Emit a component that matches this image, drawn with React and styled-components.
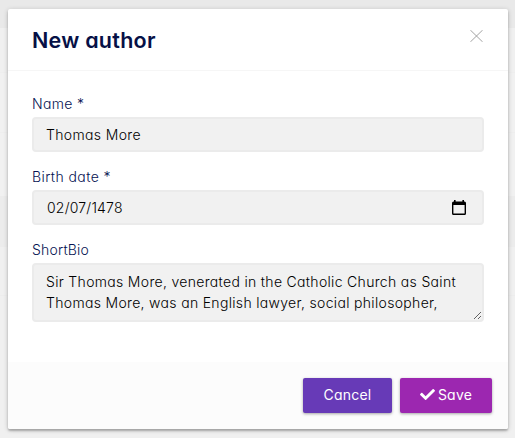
import React from 'react';
import styled, { createGlobalStyle, css } from 'styled-components';

const GlobalStyle = createGlobalStyle`
  *, *::before, *::after { box-sizing: border-box; }
  html { height: 100%; }
  body {
    margin: 0;
    height: 100%;
    overflow: hidden;
    color: #061352;
    font-family: Inter, "Open Sans", sans-serif;
    font-feature-settings: "cv11";
    font-weight: 300;
    font-size: 14px;
    background: linear-gradient(
      #e9e9e9 0 28px, #f0f0f0 28px 72px, #eeeeee 72px 73px,
      #f1f1f1 73px 132px, #eeeeee 132px 133px, #f1f1f1 133px 196px,
      #ececec 196px 247px, #f0f0f0 247px 295px, #ededed 295px 296px, #f0f0f0 296px
    );
  }
`;

const Backdrop = styled.main`
  height: 438px;
  padding: 9px 7px 9px 8px;
`;

const Dialog = styled.section`
  display: flex;
  flex-direction: column;
  height: 420px;
  background: #fff;
  border-radius: 2px;
  overflow: hidden;
  box-shadow: 0 2px 2px rgba(0, 0, 0, 0.22), 0 1px 5px rgba(0, 0, 0, 0.2);
`;

const Header = styled.header`
  display: flex;
  justify-content: space-between;
  height: 62px;
  padding: 15px 25px 0 24px;
  border-bottom: 1px solid #f6f6f6;
`;

const Title = styled.h1`
  margin: 0;
  font-size: 21.5px;
  line-height: 32px;
  font-weight: 600;
  letter-spacing: 0.25px;
  color: #061046;
`;

const CloseButton = styled.button`
  display: flex;
  width: 13px;
  height: 13px;
  margin-top: 6px;
  padding: 0;
  border: 0;
  background: none;
  color: #999;
`;

const Form = styled.form`
  flex: 1;
  display: flex;
  flex-direction: column;
  gap: 14px;
  padding: 22px 24px 0;
`;

const Field = styled.label`
  display: flex;
  flex-direction: column;
`;

const LabelText = styled.span`
  height: 24px;
  line-height: 22px;
  letter-spacing: ${({ $tracking }) => $tracking || '0.35px'};
`;

const control = css`
  display: block;
  width: 100%;
  margin: 0;
  padding: 0 12px;
  border: 2px solid #ebebeb;
  border-radius: 4px;
  outline: none;
  background: #f1f1f1;
  color: #000;
  font: inherit;
  font-feature-settings: inherit;
  letter-spacing: ${({ $tracking }) => $tracking || '0.35px'};
`;

const Input = styled.input`
  ${control}
  height: 35px;
`;

const DateBox = styled.div`
  ${control}
  display: flex;
  align-items: center;
  justify-content: space-between;
  height: 35px;
  padding: 0 16px 0 13px;
`;

const TextArea = styled.textarea`
  ${control}
  height: 59px;
  padding: 6px 12px 0;
  line-height: 21px;
  overflow: hidden;
  resize: vertical;
  white-space: pre;
`;

const Footer = styled.footer`
  display: flex;
  justify-content: flex-end;
  gap: 8px;
  height: 67px;
  padding: 16px 16px 0;
  background: #fcfcfc;
`;

const Button = styled.button`
  display: flex;
  align-items: center;
  justify-content: center;
  gap: 3px;
  width: ${({ $width }) => $width};
  height: 35px;
  padding: 0 0 2px;
  border: 0;
  border-radius: 2px;
  background: ${({ $tone }) => $tone};
  color: #fff;
  font: inherit;
  font-weight: 400;
  font-feature-settings: inherit;
  letter-spacing: 0.2px;
  box-shadow: 0 1px 3px rgba(0, 0, 0, 0.35);
`;

const CloseIcon = () => (
  <svg width="13" height="12" viewBox="0 0 13 12" stroke="currentColor" strokeWidth="0.9">
    <path d="M.3 0 12.7 12M12.7 0 .3 12" />
  </svg>
);

const CalendarIcon = () => (
  <svg width="14" height="15" viewBox="0 0 14 15">
    <path fill="#000" fillRule="evenodd" d="M2 0h1.6v1.5h6.8V0H12v1.5h.5A1.5 1.5 0 0 1 14 3v10.5a1.5 1.5 0 0 1-1.5 1.5h-11A1.5 1.5 0 0 1 0 13.500V3a1.500 1.500 0 0 1 1.500-1.500H2zM1.400 5v8.600h11.200V5z" />
  </svg>
);

const CheckIcon = () => (
  <svg width="15" height="15" viewBox="0 0 512 512" fill="currentColor">
    <path d="M173.898 439.404l-166.400-166.400c-9.997-9.997-9.997-26.206 0-36.204l36.203-36.204c9.997-9.998 26.207-9.998 36.204 0L192 312.690 432.095 72.596c9.997-9.997 26.207-9.997 36.204 0l36.203 36.204c9.997 9.997 9.997 26.206 0 36.204l-294.400 294.401c-9.998 9.997-26.207 9.997-36.204-.001z" />
  </svg>
);

const bio = 'Sir Thomas More, venerated in the Catholic Church as Saint\nThomas More, was an English lawyer, social philosopher,';

export default function App() {
  return (
    <>
      <GlobalStyle />
      <Backdrop>
        <Dialog role="dialog" aria-label="New author">
          <Header>
            <Title>New author</Title>
            <CloseButton type="button" aria-label="Close"><CloseIcon /></CloseButton>
          </Header>
          <Form>
            <Field>
              <LabelText>Name *</LabelText>
              <Input defaultValue="Thomas More" />
            </Field>
            <Field>
              <LabelText $tracking="0.42px">Birth date *</LabelText>
              <DateBox $tracking="0.2px"><span>02/07/1478</span><CalendarIcon /></DateBox>
            </Field>
            <Field>
              <LabelText $tracking="0.2px">ShortBio</LabelText>
              <TextArea defaultValue={bio} spellCheck={false} $tracking="0.32px" />
            </Field>
          </Form>
          <Footer>
            <Button type="button" $tone="#673ab7" $width="89px">Cancel</Button>
            <Button type="button" $tone="#9c27b0" $width="92px"><CheckIcon />Save</Button>
          </Footer>
        </Dialog>
      </Backdrop>
    </>
  );
}
